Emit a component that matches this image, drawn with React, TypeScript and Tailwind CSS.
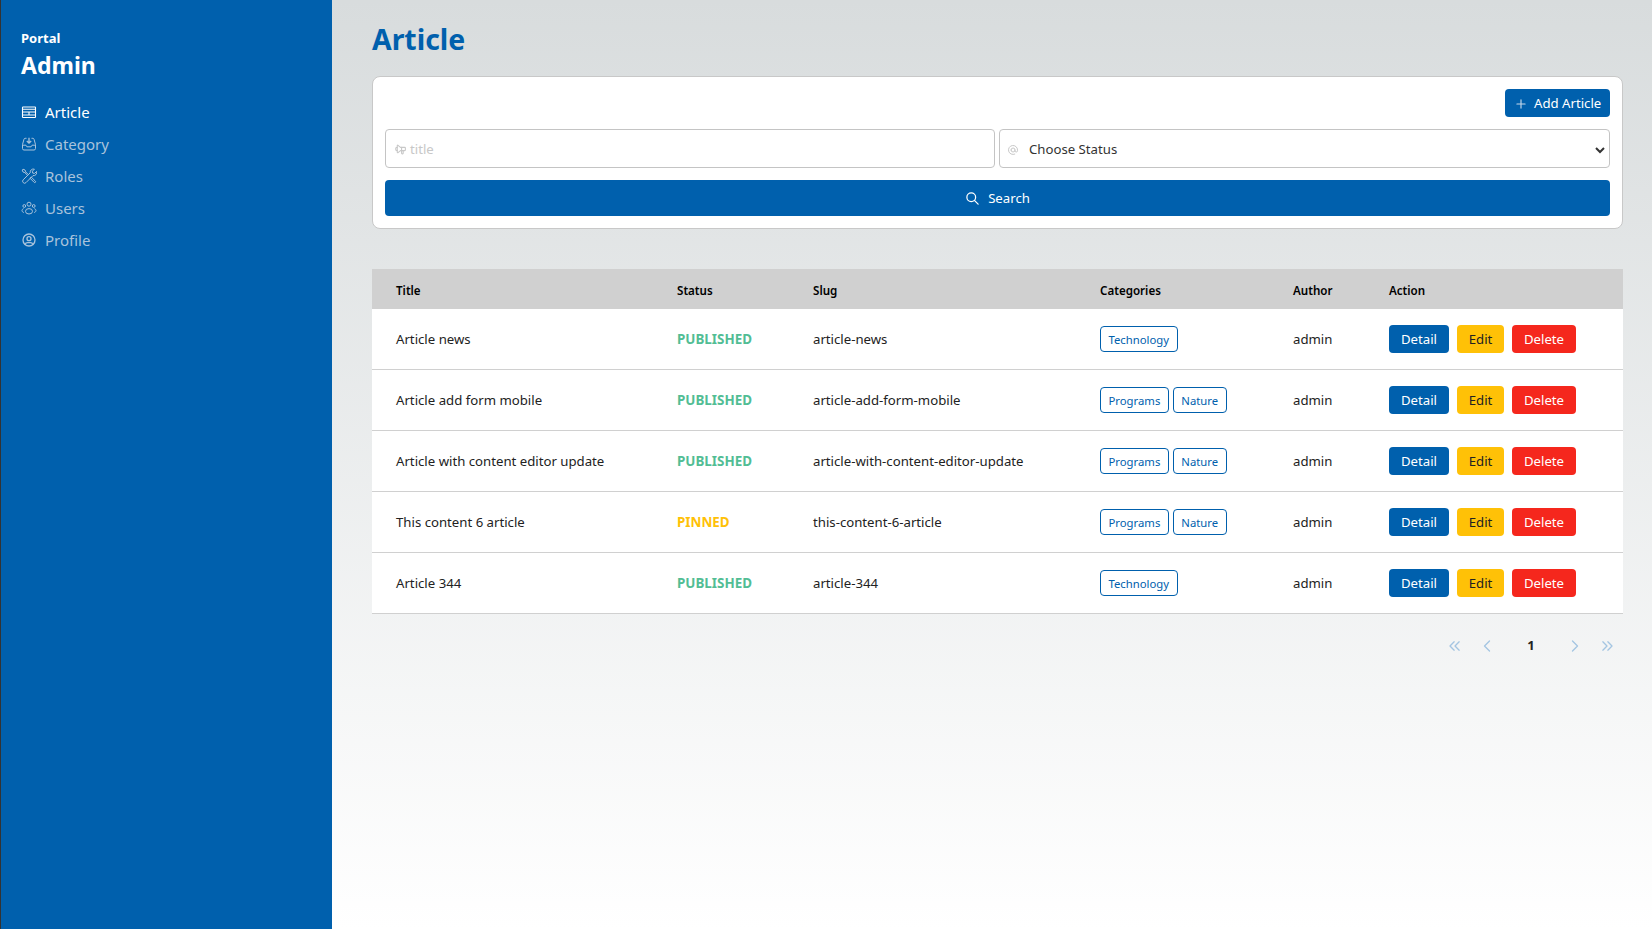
import {
  TbAt,
  TbChevronLeft,
  TbChevronRight,
  TbChevronsLeft,
  TbChevronsRight,
  TbPlus,
  TbSearch,
  TbSpeakerphone,
  TbUserCircle,
} from 'react-icons/tb';

const ArticleIcon = () => (
  <svg width="16" height="16" viewBox="0 0 16 16" fill="none" stroke="currentColor" strokeWidth="1.1">
    <rect x="1.5" y="3" width="13" height="10.5" rx="0.6" />
    <path d="M1.5 5.2h13M1.5 8h13M1.5 11h13M8 8v3" />
  </svg>
);

const CategoryIcon = () => (
  <svg width="16" height="16" viewBox="0 0 16 16" fill="none" stroke="currentColor" strokeWidth="1">
    <path d="M1.5 8.5v4a1.5 1.5 0 0 0 1.5 1.5h10a1.5 1.5 0 0 0 1.5-1.5v-4" />
    <path d="M1.5 8.5 3 3.2a1.2 1.2 0 0 1 1.1-.9h1.4M14.5 8.5 13 3.2a1.2 1.2 0 0 0-1.1-.9h-1.4" />
    <path d="M1.5 9.2h3.4l1 1.6h4.2l1-1.6h3.4" />
    <path d="M8 1.8v5.2M5.8 5 8 7.2 10.2 5" strokeWidth="1.3" />
  </svg>
);

const RolesIcon = () => (
  <svg width="16" height="16" viewBox="0 0 16 16" fill="none" stroke="currentColor" strokeWidth="1">
    <path d="M2.2 11.8l7-7a3.2 3.2 0 0 1 4.2-3.6l-2 2 .3 1.9 1.9.3 2-2a3.2 3.2 0 0 1-3.6 4.2l-7 7a1.5 1.5 0 0 1-2.8-2.8z" />
    <path d="M2 1.2 1.2 2l.8 2 1.8.6 2.8 2.8M3.8 4.6l.8-.8M4.6 3.8 7.2 6.4M2 1.2l2 .8.6 1.8" />
    <path d="M9 10.2 10.2 9l4.2 4.2a.85.85 0 0 1-1.2 1.2z" />
  </svg>
);

const UsersIcon = () => (
  <svg width="16" height="16" viewBox="0 0 16 16" fill="none" stroke="currentColor" strokeWidth="1">
    <circle cx="8" cy="4.2" r="2" />
    <circle cx="3.3" cy="6" r="1.4" />
    <circle cx="12.7" cy="6" r="1.4" />
    <path d="M4.5 11.3a3.5 2.7 0 0 1 7 0a3.5 2.7 0 0 1-7 0z" />
    <path d="M2.6 8.6C1.5 9 1 9.8 1 10.6s.6 1.5 1.8 1.9M13.4 8.6c1.1.4 1.6 1.2 1.6 2s-.6 1.5-1.8 1.9" />
  </svg>
);

const ProfileIcon = () => <TbUserCircle size={16} />;

const menu = [
  { label: 'Article', icon: ArticleIcon, active: true },
  { label: 'Category', icon: CategoryIcon },
  { label: 'Roles', icon: RolesIcon },
  { label: 'Users', icon: UsersIcon },
  { label: 'Profile', icon: ProfileIcon },
];

const articles = [
  { title: 'Article news', status: 'PUBLISHED', slug: 'article-news', categories: ['Technology'] },
  { title: 'Article add form mobile', status: 'PUBLISHED', slug: 'article-add-form-mobile', categories: ['Programs', 'Nature'] },
  { title: 'Article with content editor update', status: 'PUBLISHED', slug: 'article-with-content-editor-update', categories: ['Programs', 'Nature'] },
  { title: 'This content 6 article', status: 'PINNED', slug: 'this-content-6-article', categories: ['Programs', 'Nature'] },
  { title: 'Article 344', status: 'PUBLISHED', slug: 'article-344', categories: ['Technology'] },
];

const App = () => {
  return (
    <div className="flex h-[929px] overflow-hidden font-['Noto_Sans','Open_Sans',sans-serif] text-[13.2px] text-[#222]">
      <aside className="w-[332px] shrink-0 border-l border-l-[#333] bg-[#0060ad] pl-5 pt-7 text-white">
        <div className="text-[13px] font-bold leading-5">Portal</div>
        <div className="mt-px text-[23px] font-bold leading-8">Admin</div>
        <nav className="mt-[15px] flex flex-col">
          {menu.map((item) => (
            <div
              key={item.label}
              className={`flex h-8 items-center gap-2 text-[15px] ${item.active ? 'text-white' : 'text-[#a9c3dc]'}`}
            >
              <item.icon />
              {item.label}
            </div>
          ))}
        </nav>
      </aside>

      <main className="flex-1 bg-gradient-to-b from-[#d8dcdd] to-white pl-10 pr-[29px] pt-[17px]">
        <h1 className="text-[28.4px] font-bold leading-[44px] text-[#0060ad]">Article</h1>

        <section className="mt-[15px] rounded-lg border border-[#c8c8c8] bg-white p-3">
          <div className="flex justify-end">
            <button className="flex h-7 w-[105px] items-center gap-[6px] rounded bg-[#0060ad] pl-[9px] pt-px text-white">
              <TbPlus size={14} className="text-[#c5d7e9]" />
              Add Article
            </button>
          </div>
          <div className="mt-3 grid grid-cols-[610px_1fr] gap-1">
            <div className="flex h-[39px] items-center gap-[3px] rounded border border-[#c4c4c4] px-2 pt-[2px] text-[#c8c8c8]">
              <TbSpeakerphone size={13} className="-scale-x-100" />
              title
            </div>
            <div className="flex h-[39px] items-center rounded border border-[#c4c4c4] pl-[7px] pr-[3px] pt-[2px] text-[#333]">
              <TbAt size={12} className="text-[#c8c8c8]" />
              <span className="ml-[10px] flex-1">Choose Status</span>
              <svg width="12" height="12" viewBox="0 0 12 12" fill="none" stroke="#333" strokeWidth="2">
                <path d="M2 4l4 4 4-4" />
              </svg>
            </div>
          </div>
          <button className="mt-3 flex h-9 w-full items-center justify-center gap-2 rounded bg-[#0060ad] pt-px text-white">
            <TbSearch size={15} />
            Search
          </button>
        </section>

        <table className="mt-10 w-full table-fixed border-separate border-spacing-0 text-left">
          <thead>
            <tr className="h-10 bg-[#d0d0d0] text-[11.6px] text-black [&>th]:pt-[3px]">
              <th className="w-[305px] pl-6 font-semibold">Title</th>
              <th className="w-[136px] font-semibold">Status</th>
              <th className="w-[287px] font-semibold">Slug</th>
              <th className="w-[193px] font-semibold">Categories</th>
              <th className="w-[96px] font-semibold">Author</th>
              <th className="font-semibold">Action</th>
            </tr>
          </thead>
          <tbody>
            {articles.map((a) => (
              <tr key={a.slug} className="h-[61px] bg-white [&>td]:border-b [&>td]:border-[#d0d0d0]">
                <td className="pl-6 pt-px">{a.title}</td>
                <td className={`text-[13.4px] font-bold ${a.status === 'PINNED' ? 'text-[#ffc107]' : 'text-[#52bd94]'}`}>{a.status}</td>
                <td className="pt-px">{a.slug}</td>
                <td>
                  <div className="flex gap-1">
                    {a.categories.map((c) => (
                      <span key={c} className="flex h-[26px] items-center rounded border border-[#0060ad] px-[7.5px] pt-[2px] text-[11.3px] text-[#0060ad]">
                        {c}
                      </span>
                    ))}
                  </div>
                </td>
                <td className="pt-px">admin</td>
                <td>
                  <div className="flex gap-2">
                    <button className="h-7 w-[60px] rounded bg-[#0060ad] pt-px text-white">Detail</button>
                    <button className="h-7 w-[47px] rounded bg-[#ffc107] pt-px text-[#222]">Edit</button>
                    <button className="h-7 w-[64px] rounded bg-[#f5271d] pt-px text-white">Delete</button>
                  </div>
                </td>
              </tr>
            ))}
          </tbody>
        </table>

        <div className="mt-[22px] flex items-center justify-end pr-[6px] text-[#a4c5e2]">
          <TbChevronsLeft size={20} strokeWidth={1.6} />
          <TbChevronLeft size={20} strokeWidth={1.6} className="ml-3" />
          <span className="w-[68px] text-center text-[13px] font-bold text-[#222]">1</span>
          <TbChevronRight size={20} strokeWidth={1.6} />
          <TbChevronsRight size={20} strokeWidth={1.6} className="ml-3" />
        </div>
      </main>
    </div>
  );
};

export default App;
